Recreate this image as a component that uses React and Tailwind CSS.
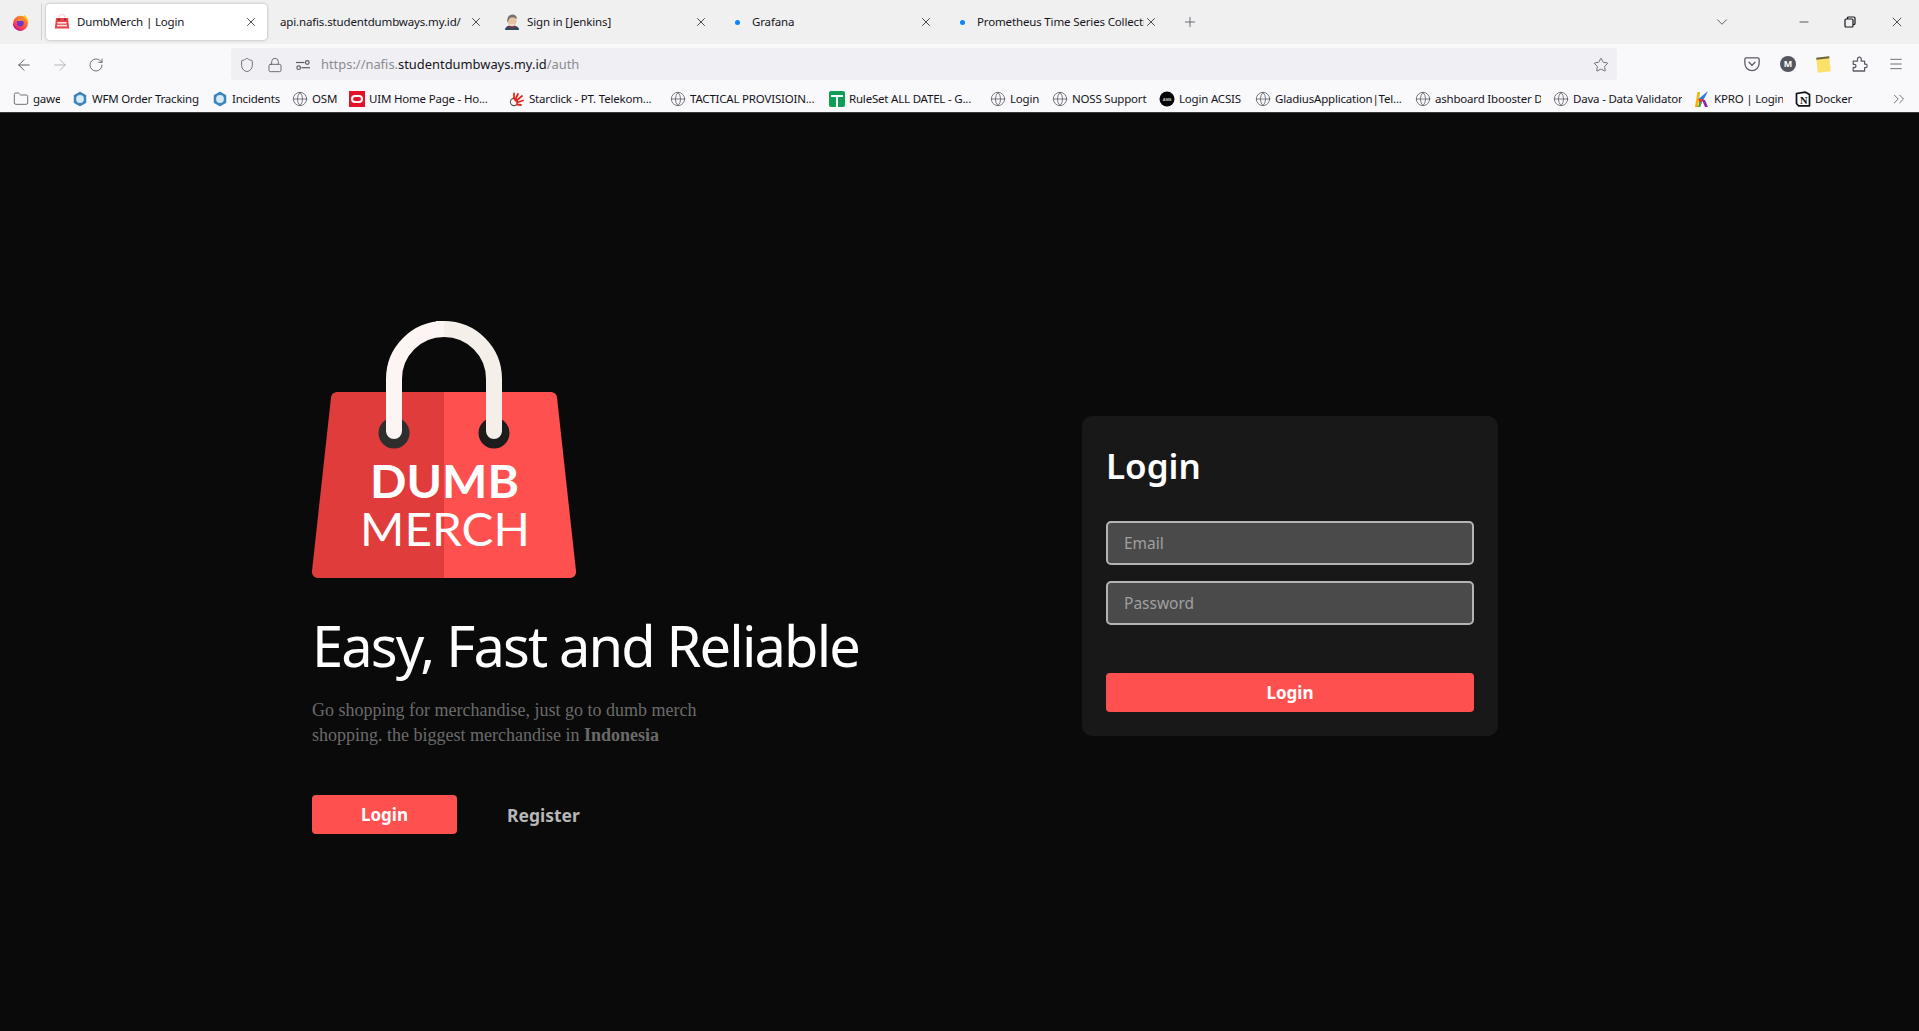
import { ArrowLeft, ArrowRight, RotateCw, Shield, Lock, Star, Menu, X, Plus, ChevronDown, Minus, ChevronsRight, Folder, Globe } from "lucide-react";

const tabs = [
    { label: "api.nafis.studentdumbways.my.id/", text: "w-[190px] pl-[1px]" },
    { label: "Sign in [Jenkins]", icon: "jenkins", text: "w-[167px] ml-[7px]" },
    { label: "Grafana", icon: "dot", text: "w-[167px] ml-[7px]" },
    { label: "Prometheus Time Series Collection", icon: "dot", text: "w-[167px] ml-[7px]" },
];

const bookmarks = [
    { label: "gawe", icon: "folder", w: "w-[27px]" },
    { label: "WFM Order Tracking", icon: "hex", w: "w-[108px]" },
    { label: "Incidents", icon: "hex", w: "w-[48px]" },
    { label: "OSM", icon: "globe", w: "w-[25px]" },
    { label: "UIM Home Page - Ho...", icon: "oracle", w: "w-[128px]" },
    { label: "Starclick - PT. Telekom...", icon: "spark", w: "w-[129px]" },
    { label: "TACTICAL PROVISIOIN...", icon: "globe", w: "w-[127px]" },
    { label: "RuleSet ALL DATEL - G...", icon: "sheet", w: "w-[129px]" },
    { label: "Login", icon: "globe", w: "w-[30px]" },
    { label: "NOSS Support", icon: "globe", w: "w-[75px]" },
    { label: "Login ACSIS", icon: "acsis", w: "w-[64px]" },
    { label: "GladiusApplication|Tel...", icon: "globe", w: "w-[128px]" },
    { label: "ashboard Ibooster D", icon: "globe", w: "w-[106px]" },
    { label: "Dava - Data Validator", icon: "globe", w: "w-[109px]" },
    { label: "KPRO | Login", icon: "kpro", w: "w-[69px]" },
    { label: "Docker", icon: "notion", w: "w-[38px]" },
];

const FirefoxLogo = () => (
    <svg viewBox="0 0 17 17" className="w-[17px] h-[17px]">
        <defs>
            <linearGradient id="ffBody" x1="0.8" y1="0" x2="0.2" y2="1">
                <stop offset="0" stopColor="#ff9a1f" />
                <stop offset="0.5" stopColor="#ff5a3c" />
                <stop offset="1" stopColor="#e31587" />
            </linearGradient>
        </defs>
        <circle cx="8.500" cy="9.300" r="7.500" fill="url(#ffBody)" />
        <path d="M11.500.5c3.500 2 5.500 5.500 5 9-.6-2.800-2.300-4.800-4.500-5.800.4-1.200.2-2.300-.5-3.200z" fill="#ffc61e" />
        <path d="M1 9.300a7.500 7.500 0 0 0 9.800 7.100C6.500 16 3 13.500 1 9.300z" fill="#c5138f" />
        <circle cx="8.300" cy="8.900" r="3.400" fill="#7233c9" />
        <path d="M5 6.200c2.200-1.900 6-1.300 7 1.200-1.700-1-3.500-1-4.800-.2z" fill="#ff9d2e" />
    </svg>
);

const BagFavicon = () => (
    <svg viewBox="0 0 16 16" className="w-4 h-4">
        <path d="M5 5V3.500a3 3 0 0 1 6 0V5" fill="none" stroke="#f5c9c9" strokeWidth="1" />
        <path d="M2 4h12l1.200 10.500H.8z" fill="#e8434a" />
        <rect x="3.500" y="8" width="9" height="1.600" fill="#fff" opacity="0.85" />
        <rect x="3" y="10.800" width="10" height="1.600" fill="#fff" opacity="0.85" />
        <circle cx="5" cy="5.500" r="1" fill="#7d1f22" />
        <circle cx="11" cy="5.500" r="1" fill="#7d1f22" />
    </svg>
);

const Jenkins = () => (
    <svg viewBox="0 0 16 16" className="w-4 h-4">
        <path d="M1 16c0-3 2.500-4.500 7-4.500s7 1.500 7 4.500z" fill="#33485c" />
        <ellipse cx="8" cy="7" rx="4.600" ry="5.200" fill="#e8c3a4" />
        <path d="M3.400 8C2.600 2.500 6 .2 9 .5c2.700.3 4.200 2.300 3.700 4.600C11 3 7 3 5.500 4.500 4.800 5.200 4.800 8 3.400 8z" fill="#77736f" />
        <path d="M5.500 9.500c1.500 1.200 3.500 1.200 5 0-.3 2-1.300 2.700-2.500 2.700S5.800 11.500 5.500 9.500z" fill="#f3e2d2" />
        <path d="M8 13l-2.500-1.200v2.400zM8 13l2.500-1.200v2.400z" fill="#c2282d" />
    </svg>
);

const Sliders = () => (
    <svg viewBox="0 0 16 16" className="w-4 h-4" fill="none" stroke="#5b5b66" strokeWidth="1.200">
        <path d="M1 5.500h8.500" />
        <circle cx="12.300" cy="5.500" r="1.800" />
        <circle cx="3.700" cy="10.700" r="1.800" />
        <path d="M6.500 10.700H15" />
    </svg>
);

const Pocket = () => (
    <svg viewBox="0 0 16 16" className="w-4 h-4" fill="none" stroke="#5b5b66" strokeWidth="1.300">
        <path d="M2.200 1.800h11.600a1.300 1.300 0 0 1 1.300 1.300v4.400a7.100 7.100 0 0 1-14.200 0V3.100a1.300 1.300 0 0 1 1.300-1.300z" />
        <path d="M5 6.300l3 2.900 3-2.900" strokeLinecap="round" strokeLinejoin="round" />
    </svg>
);

const Extensions = () => (
    <svg viewBox="0 0 16 16" className="w-4 h-4" fill="none" stroke="#5b5b66" strokeWidth="1.300" strokeLinejoin="round">
        <path d="M1.800 15V11.500h1.300a1.600 1.600 0 0 0 0-3.200H1.800V5.200h4.500V3.100a2 2 0 0 1 3.900-.6c.1.500 0 1.700 0 2.700h3.600v3h1a1.700 1.700 0 0 1 0 3.400h-1V15z" transform="translate(-0.500 0) scale(0.95 1)" />
    </svg>
);

const BookmarkIcon = ({ type }) => {
    if (type === "folder") return <Folder className="w-4 h-4 text-[#5b5b66]" strokeWidth={1.3} />;
    if (type === "globe") return <Globe className="w-4 h-4 text-[#5b5b66]" strokeWidth={1.2} />;
    if (type === "hex") {
        return (
            <svg viewBox="0 0 16 16" className="w-4 h-4">
                <path d="M8 1.500l5.500 3.100v6.800L8 14.500l-5.500-3.100V4.600z" fill="#3c86bb" stroke="#3c86bb" strokeWidth="1.500" strokeLinejoin="round" />
                <circle cx="8" cy="8" r="3.900" fill="#d7e9f5" />
            </svg>
        );
    }
    if (type === "oracle") {
        return (
            <div className="w-4 h-4 bg-[#e5132a] flex items-center justify-center">
                <div className="w-[12px] h-[8px] rounded-[4px] border-2 border-white" />
            </div>
        );
    }
    if (type === "spark") {
        return (
            <svg viewBox="0 0 16 16" className="w-4 h-4" fill="none">
                <circle cx="5" cy="11" r="3.600" stroke="#555" strokeWidth="1.100" />
                <path d="M6 9l3-6M7 10l6-5M8 11.500l6-2M8 13.500l4 .5M5 7.500l0-5" stroke="#e0281f" strokeWidth="1.800" strokeLinecap="round" />
            </svg>
        );
    }
    if (type === "sheet") {
        return (
            <div className="w-4 h-4 rounded-[2px] bg-[#0f9d58] relative">
                <div className="absolute left-[2px] right-[2px] top-[4px] h-[2px] bg-white" />
                <div className="absolute left-[7px] top-[4px] bottom-0 w-[2px] bg-white" />
            </div>
        );
    }
    if (type === "acsis") {
        return (
            <svg viewBox="0 0 16 16" className="w-4 h-4">
                <circle cx="8" cy="8" r="7.500" fill="#050505" />
                <text x="8" y="9.500" textAnchor="middle" fontSize="4" fontWeight="700" fill="#d0d0d0" fontFamily="Liberation Sans, sans-serif">ASIS</text>
            </svg>
        );
    }
    if (type === "kpro") {
        return (
            <svg viewBox="0 0 16 16" className="w-4 h-4">
                <path d="M1 16L3.500 1H6L4 16z" fill="#f5b400" />
                <path d="M4.500 8L14 0l-4 8z" fill="#2c7be5" />
                <path d="M4.500 8l5.500 0-2 3-2 5z" fill="#e53935" />
                <path d="M8 9l3 0 3 7h-3z" fill="#8e24aa" />
                <path d="M4 16l2-6 2 1-2 5z" fill="#43a047" />
            </svg>
        );
    }
    return (
        <svg viewBox="0 0 16 16" className="w-4 h-4">
            <path d="M1.500 2.500L10.500 1.200 14.500 3.500V14.800H3.500L1.500 12.500z" fill="#fff" stroke="#111" strokeWidth="1.700" strokeLinejoin="round" />
            <text x="8.800" y="12.800" textAnchor="middle" fontSize="10.500" fontWeight="700" fill="#111" fontFamily="Liberation Serif, serif">N</text>
        </svg>
    );
};

const BagLogo = () => (
    <svg viewBox="0 0 266 260" className="w-[266px] h-[260px] block">
        {/* origin is at 311,320 on the page */}
        <path d="M133 72H26a6 6 0 0 0-6 5.500L1 251a6 6 0 0 0 6 7h126z" fill="#e03c3c" />
        <path d="M133 72h107a6 6 0 0 1 6 5.500l19 173.500a6 6 0 0 1-6 7H133z" fill="#ff5050" />
        <circle cx="83" cy="113" r="15.500" fill="#2e2e2e" />
        <circle cx="183" cy="113" r="15.500" fill="#1c1c1c" />
        <path d="M83 111V59a50 50 0 0 1 50-50" fill="none" stroke="#fdf5f3" strokeWidth="16" strokeLinecap="round" />
        <path d="M183 111V59a50 50 0 0 0-50-50" fill="none" stroke="#f5efe9" strokeWidth="16" strokeLinecap="round" />
        <path d="M125 1h8v16h-8z" fill="#fdf5f3" />
        <text x="59" y="178" fontSize="46" fontWeight="700" fill="#fff" fontFamily="Lato, sans-serif" textLength="149" lengthAdjust="spacingAndGlyphs">DUMB</text>
        <text x="49" y="226" fontSize="46" fontWeight="400" fill="#fff" fontFamily="Lato, sans-serif" textLength="170" lengthAdjust="spacingAndGlyphs">MERCH</text>
    </svg>
);

const App = () => {
    return (
        <div className="min-h-[1031px] bg-[#0a0a0a] font-['Noto_Sans',sans-serif]">
            {/* Tab strip */}
            <div className="h-[44px] bg-[#f0f0f1] flex items-center text-[#15141a] text-[11.5px] tracking-[-0.15px]">
                <div className="w-[42px] h-[36px] flex items-center justify-center border-r border-[#cfcfd8]">
                    <FirefoxLogo />
                </div>
                <div className="ml-[4px] w-[221px] h-[36px] bg-white rounded-[4px] shadow-[0_0_3px_rgba(0,0,0,0.3)] flex items-center pl-[8px]">
                    <BagFavicon />
                    <span className="ml-[7px] w-[167px] whitespace-nowrap">DumbMerch | Login</span>
                    <X className="w-[14px] h-[14px]" strokeWidth={1.3} />
                </div>
                {tabs.map((tab) => (
                    <div key={tab.label} className="ml-[4px] w-[221px] h-[36px] flex items-center pl-[8px]">
                        {tab.icon === "jenkins" && <Jenkins />}
                        {tab.icon === "dot" && (
                            <div className="w-4 h-4 flex items-center justify-center">
                                <div className="w-[5px] h-[5px] rounded-full bg-[#0a84ff]" />
                            </div>
                        )}
                        <span className={`whitespace-nowrap overflow-hidden ${tab.text}`}>{tab.label}</span>
                        <X className="w-[14px] h-[14px]" strokeWidth={1.3} />
                    </div>
                ))}
                <Plus className="w-4 h-4 ml-[15px] text-[#5b5b66]" strokeWidth={1.3} />
                <ChevronDown className="w-[18px] h-[18px] ml-[515px] text-[#5b5b66]" strokeWidth={1.3} />
                <Minus className="w-[14px] h-[14px] ml-[66px]" strokeWidth={1.2} />
                <svg viewBox="0 0 12 12" className="w-3 h-3 ml-[33px]" fill="none" stroke="#15141a" strokeWidth="1.200">
                    <rect x="1" y="3" width="8" height="8" rx="1" />
                    <path d="M3.500 3V2a1 1 0 0 1 1-1H10a1 1 0 0 1 1 1v5.500a1 1 0 0 1-1 1H9" />
                </svg>
                <X className="w-[16px] h-[16px] ml-[33px]" strokeWidth={1.1} />
            </div>

            {/* Toolbar */}
            <div className="h-[36px] bg-[#f9f9fb] flex items-end text-[#5b5b66]">
                <div className="w-[231px] h-[32px] flex items-center pt-[2px]">
                    <ArrowLeft className="w-[18px] h-[18px] ml-[15px]" strokeWidth={1.3} />
                    <ArrowRight className="w-[18px] h-[18px] ml-[18px] text-[#b4b4ba]" strokeWidth={1.3} />
                    <RotateCw className="w-4 h-4 ml-[19px]" strokeWidth={1.3} />
                </div>
                <div className="w-[1386px] h-[32px] bg-[#f0f0f4] rounded-[4px] flex items-center pt-[2px]">
                    <Shield className="w-4 h-4 ml-[8px]" strokeWidth={1.3} />
                    <Lock className="w-4 h-4 ml-[12px]" strokeWidth={1.3} />
                    <div className="ml-[12px]"><Sliders /></div>
                    <div className="ml-[10px] text-[12.9px] whitespace-nowrap text-[#8b8b93] w-[1272px]">
                        https://nafis.<span className="text-[#15141a]">studentdumbways.my.id</span>/auth
                    </div>
                    <Star className="w-4 h-4" strokeWidth={1.3} />
                </div>
                <div className="flex-1 h-[32px] flex items-center pl-[127px]">
                    <Pocket />
                    <div className="ml-[20px] w-4 h-4 rounded-full bg-[#55555f] text-white text-[9px] font-bold flex items-center justify-center">M</div>
                    <div className="ml-[21px] w-[13px] h-[15px] bg-[#fbe06a] border-t-2 border-[#6b6440] -rotate-6" />
                    <div className="ml-[22px]"><Extensions /></div>
                    <Menu className="w-[16px] h-[16px] ml-[20px]" strokeWidth={1.3} />
                </div>
            </div>

            {/* Bookmarks */}
            <div className="h-[32px] bg-[#f9f9fb] flex items-center gap-[12px] pl-[13px] pt-[6px] text-[#15141a] text-[11.5px] tracking-[-0.2px] relative">
                {bookmarks.map((b) => (
                    <div key={b.label} className="flex items-center gap-[4px]">
                        <BookmarkIcon type={b.icon} />
                        <span className={`${b.w} whitespace-nowrap overflow-hidden`}>{b.label}</span>
                    </div>
                ))}
                <ChevronsRight className="absolute right-[11px] top-[10px] w-[18px] h-[18px] text-[#5b5b66]" strokeWidth={1.2} />
            </div>

            {/* Page */}
            <main className="h-[919px] flex items-center pl-[311px] pt-[8px] border-t border-[#3a3a3a]">
                <section className="w-[771px] pl-[1px] pt-[2px]">
                    <div className="-ml-[1px]"><BagLogo /></div>
                    <h1 className="mt-[33px] text-white text-[56px] leading-[64px] tracking-[-1.85px] font-normal whitespace-nowrap">Easy, Fast and Reliable</h1>
                    <p className="mt-[21px] w-[420px] text-[#6a6a6a] text-[18px] leading-[25px] font-['Liberation_Serif',serif]">
                        Go shopping for merchandise, just go to dumb merch shopping. the biggest merchandise in <b>Indonesia</b>
                    </p>
                    <div className="mt-[47px] flex items-center">
                        <button className="w-[145px] h-[39px] rounded-[4px] bg-[#ff5050] text-white text-[17px] font-bold pt-[1px]">Login</button>
                        <button className="ml-[50px] text-[#b7b7b7] text-[17.500px] font-bold pt-[1px]">Register</button>
                    </div>
                </section>
                <section className="w-[416px] h-[320px] bg-[#181818] rounded-[10px] px-[24px] pt-[27px]">
                    <h2 className="text-white text-[35px] leading-[46px] font-semibold">Login</h2>
                    <div className="mt-[32px] h-[44px] rounded-[5px] border-2 border-[#b4b4b4] bg-[#4a4a4a] flex items-center pl-[16px] pt-[1px] text-[#a0a0a0] text-[15.5px]">Email</div>
                    <div className="mt-[16px] h-[44px] rounded-[5px] border-2 border-[#b4b4b4] bg-[#4a4a4a] flex items-center pl-[16px] pt-[1px] text-[#a0a0a0] text-[15.5px]">Password</div>
                    <button className="mt-[48px] w-full h-[39px] rounded-[4px] bg-[#ff5050] text-white text-[17px] font-bold pt-[1px]">Login</button>
                </section>
            </main>
        </div>
    );
};

export default App;
